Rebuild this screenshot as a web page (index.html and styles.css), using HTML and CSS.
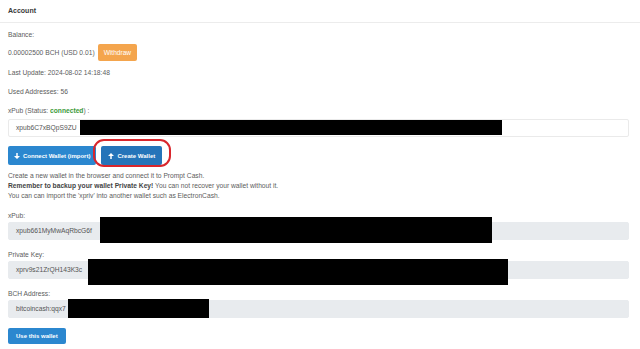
FILE: index.html
```html
<!DOCTYPE html>
<html lang="en">
<head>
  <meta charset="UTF-8" />
  <title>Account</title>
  <link rel="stylesheet" href="styles.css">
</head>
<body>

  <div class="panel">
    <div class="panel-heading">Account</div>

    <div class="panel-body">
      <p class="tight">Balance:</p>
      <div class="balance-row">
        <span>0.00002500 BCH (USD 0.01)</span>
        <button class="btn btn-orange">Withdraw</button>
      </div>
      <p>Last Update: 2024-08-02 14:18:48</p>
      <p>Used Addresses: 56</p>
      <p class="label-top">xPub (Status: <b class="ok">connected</b>) :</p>
      <div class="field">
        <div class="input">xpub6C7xBQpS9ZU</div>
        <span class="redact" style="left:72px;top:1px;width:422px;height:15px"></span>
      </div>

      <!-- Wallet buttons -->
      <div class="btn-row">
        <button class="btn btn-blue">
          <svg viewBox="0 0 8 8" width="6" height="6"><path d="M3 0h2v4h3L4 8 0 4h3z" fill="#fff"/></svg>
          Connect Wallet (import)
        </button>
        <button class="btn btn-blue dark">
          <svg viewBox="0 0 8 8" width="6" height="6"><path d="M3 8h2V4h3L4 0 0 4h3z" fill="#fff"/></svg>
          Create Wallet
        </button>
        <span class="circle"></span>
      </div>

      <div class="note">
        Create a new wallet in the browser and connect it to Prompt Cash.<br>
        <b>Remember to backup your wallet Private Key!</b> You can not recover your wallet without it.<br>
        You can can import the 'xpriv' into another wallet such as ElectronCash.
      </div>

      <p class="label">xPub:</p>
      <div class="field">
        <div class="input disabled">xpub661MyMwAqRbcG6f</div>
        <span class="redact" style="left:92px;top:-5px;width:392px;height:26px"></span>
      </div>

      <p class="label">Private Key:</p>
      <div class="field">
        <div class="input disabled">xprv9s21ZrQH143K3c</div>
        <span class="redact" style="left:80px;top:-2px;width:420px;height:26px"></span>
      </div>

      <p class="label">BCH Address:</p>
      <div class="field">
        <div class="input disabled">bitcoincash:qqx7</div>
        <span class="redact" style="left:60px;top:-1px;width:141px;height:19px"></span>
      </div>

      <button class="btn btn-blue use">Use this wallet</button>
    </div>
  </div>

</body>
</html>
```

FILE: styles.css
```css
* {
  margin: 0;
  padding: 0;
  box-sizing: border-box;
}

body {
  font-family: 'Liberation Sans', Arial, sans-serif;
  font-size: 6.7px;
  color: #5c5c5c;
  background: #fff;
}

.panel-heading {
  height: 23px;
  padding: 0 8px;
  line-height: 21px;
  font-size: 7px;
  font-weight: bold;
  color: #3a3a3a;
  border-bottom: 1px solid #ececec;
}

.panel-body {
  padding: 6px 11px 0 8px;
}

p {
  line-height: 11px;
  margin-bottom: 8px;
}

p.tight {
  margin-bottom: 4px;
}

p.label-top {
  margin-bottom: 3px;
}

p.label {
  margin-bottom: 1px;
}

.ok {
  color: #3a9a3a;
}

.balance-row {
  display: flex;
  align-items: center;
  gap: 3px;
  margin-bottom: 6px;
}

/* Buttons */
.btn {
  font-family: inherit;
  font-size: 6.6px;
  border: none;
  border-radius: 2px;
  color: #fff;
  cursor: pointer;
  display: inline-flex;
  align-items: center;
  gap: 3px;
}

.btn-orange {
  background: #f4a54d;
  height: 17px;
  padding: 0 6px;
}

.btn-blue {
  background: #2b87cf;
  height: 19px;
  padding: 0 6px;
  font-weight: bold;
  font-size: 6px;
}

.btn-blue.dark {
  background: #2574b9;
  padding: 0 7px;
}

.btn-row {
  position: relative;
  display: flex;
  gap: 5px;
  margin: 9px 0 6px;
}

.circle {
  position: absolute;
  left: 85px;
  top: -7px;
  width: 78px;
  height: 28px;
  border: 2px solid #d9262c;
  border-radius: 11px;
}

.note {
  line-height: 10px;
  margin-bottom: 9px;
}

.note b {
  color: #444;
}

/* Inputs */
.field {
  position: relative;
  margin-bottom: 9px;
}

.input {
  height: 18px;
  line-height: 16px;
  padding: 0 7px;
  border: 1px solid #eaeaea;
  border-radius: 2px;
  background: #fff;
  color: #555;
}

.input.disabled {
  background: #e8ebee;
  border-color: #e8ebee;
}

.redact {
  position: absolute;
  background: #000;
}

.use {
  margin-top: 1px;
  height: 16px;
  padding: 0 8px;
}
```
